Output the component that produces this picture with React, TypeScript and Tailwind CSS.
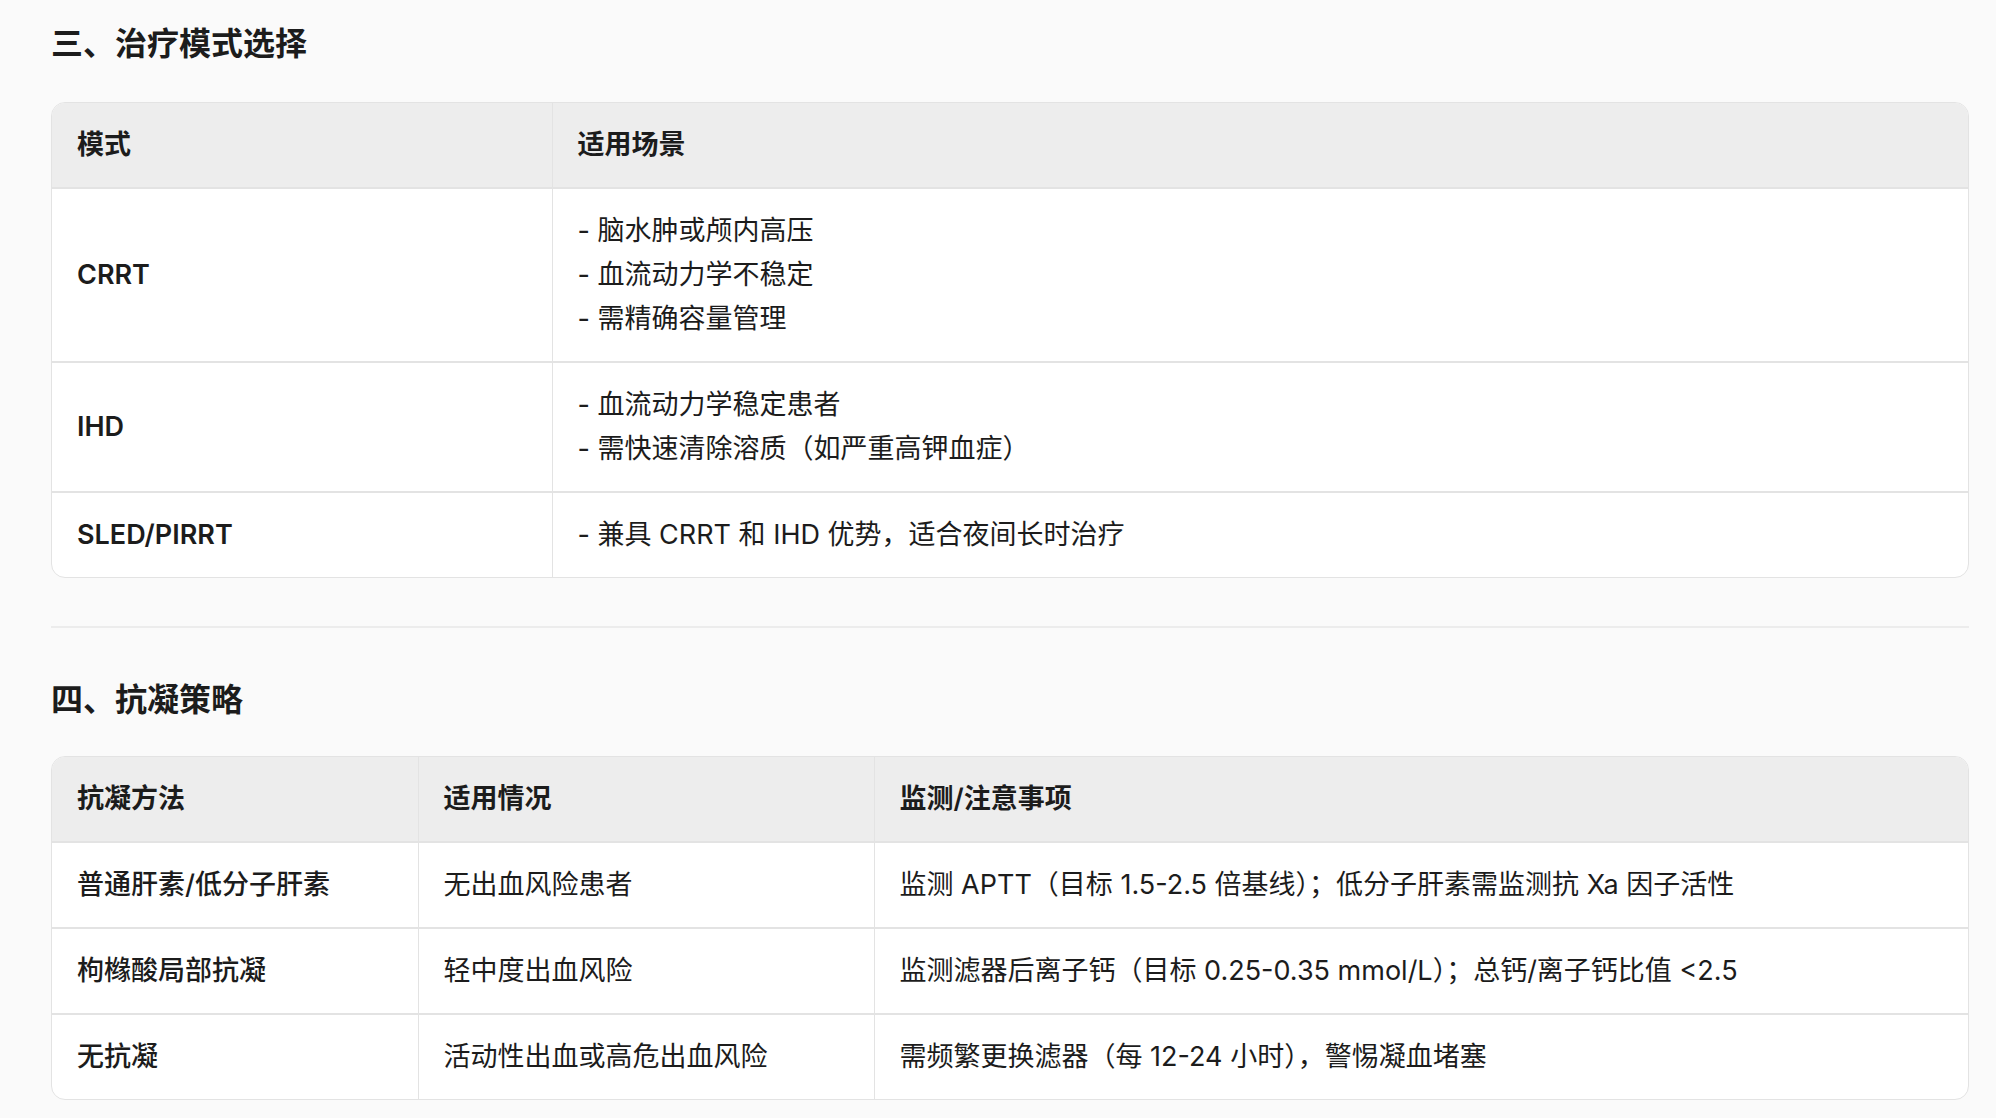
const font = { fontFamily: '"Inter", "Noto Sans CJK SC", sans-serif' }

const Cell = ({ children, head, className = '' }: { children: React.ReactNode; head?: boolean; className?: string }) => (
  <td className={`px-[25px] py-[20px] align-middle border-r border-[#e3e3e3] last:border-r-0 ${head ? 'font-semibold' : ''} ${className}`}>
    {children}
  </td>
)

const Table = ({ cols, headers, rows }: { cols: string[]; headers: string[]; rows: (string | string[])[][] }) => (
  <div className="rounded-[14px] border border-[#e3e3e3] overflow-hidden bg-white">
    <table className="w-full border-collapse table-fixed text-[27px] leading-[44px] text-[#1c1c1c]">
      <colgroup>
        {cols.map((c, i) => <col key={i} style={{ width: c }} />)}
      </colgroup>
      <thead>
        <tr className="bg-[#ededed] border-b-2 border-[#e3e3e3]">
          {headers.map((h) => <Cell key={h} head>{h}</Cell>)}
        </tr>
      </thead>
      <tbody>
        {rows.map((r, i) => (
          <tr key={i} className="border-b-2 border-[#e3e3e3] last:border-b-0">
            {r.map((c, j) => (
              <Cell key={j} head={j === 0 && cols.length === 2} className={j === 0 && cols.length === 3 ? 'font-medium' : ''}>
                {Array.isArray(c) ? c.map((l) => <div key={l}>{l}</div>) : c}
              </Cell>
            ))}
          </tr>
        ))}
      </tbody>
    </table>
  </div>
)

export default function App() {
  return (
    <div className="min-h-screen bg-[#fafafa] pl-[51px] pr-[27px] pt-[22px] pb-4" style={font}>
      <h2 className="text-[32px] font-semibold leading-[44px] text-[#1c1c1c] mb-[36px]">三、治疗模式选择</h2>
      <Table
        cols={['500px', 'auto']}
        headers={['模式', '适用场景']}
        rows={[
          ['CRRT', ['- 脑水肿或颅内高压', '- 血流动力学不稳定', '- 需精确容量管理']],
          ['IHD', ['- 血流动力学稳定患者', '- 需快速清除溶质（如严重高钾血症）']],
          ['SLED/PIRRT', ['- 兼具 CRRT 和 IHD 优势，适合夜间长时治疗']],
        ]}
      />
      <hr className="border-0 border-t-2 border-[#ececec] mt-[48px] mb-[50px]" />
      <h2 className="text-[32px] font-semibold leading-[44px] text-[#1c1c1c] mb-[34px]">四、抗凝策略</h2>
      <Table
        cols={['366px', '456px', 'auto']}
        headers={['抗凝方法', '适用情况', '监测/注意事项']}
        rows={[
          ['普通肝素/低分子肝素', '无出血风险患者', '监测 APTT（目标 1.5-2.5 倍基线）；低分子肝素需监测抗 Xa 因子活性'],
          ['枸橼酸局部抗凝', '轻中度出血风险', '监测滤器后离子钙（目标 0.25-0.35 mmol/L）；总钙/离子钙比值 <2.5'],
          ['无抗凝', '活动性出血或高危出血风险', '需频繁更换滤器（每 12-24 小时），警惕凝血堵塞'],
        ]}
      />
    </div>
  )
}
